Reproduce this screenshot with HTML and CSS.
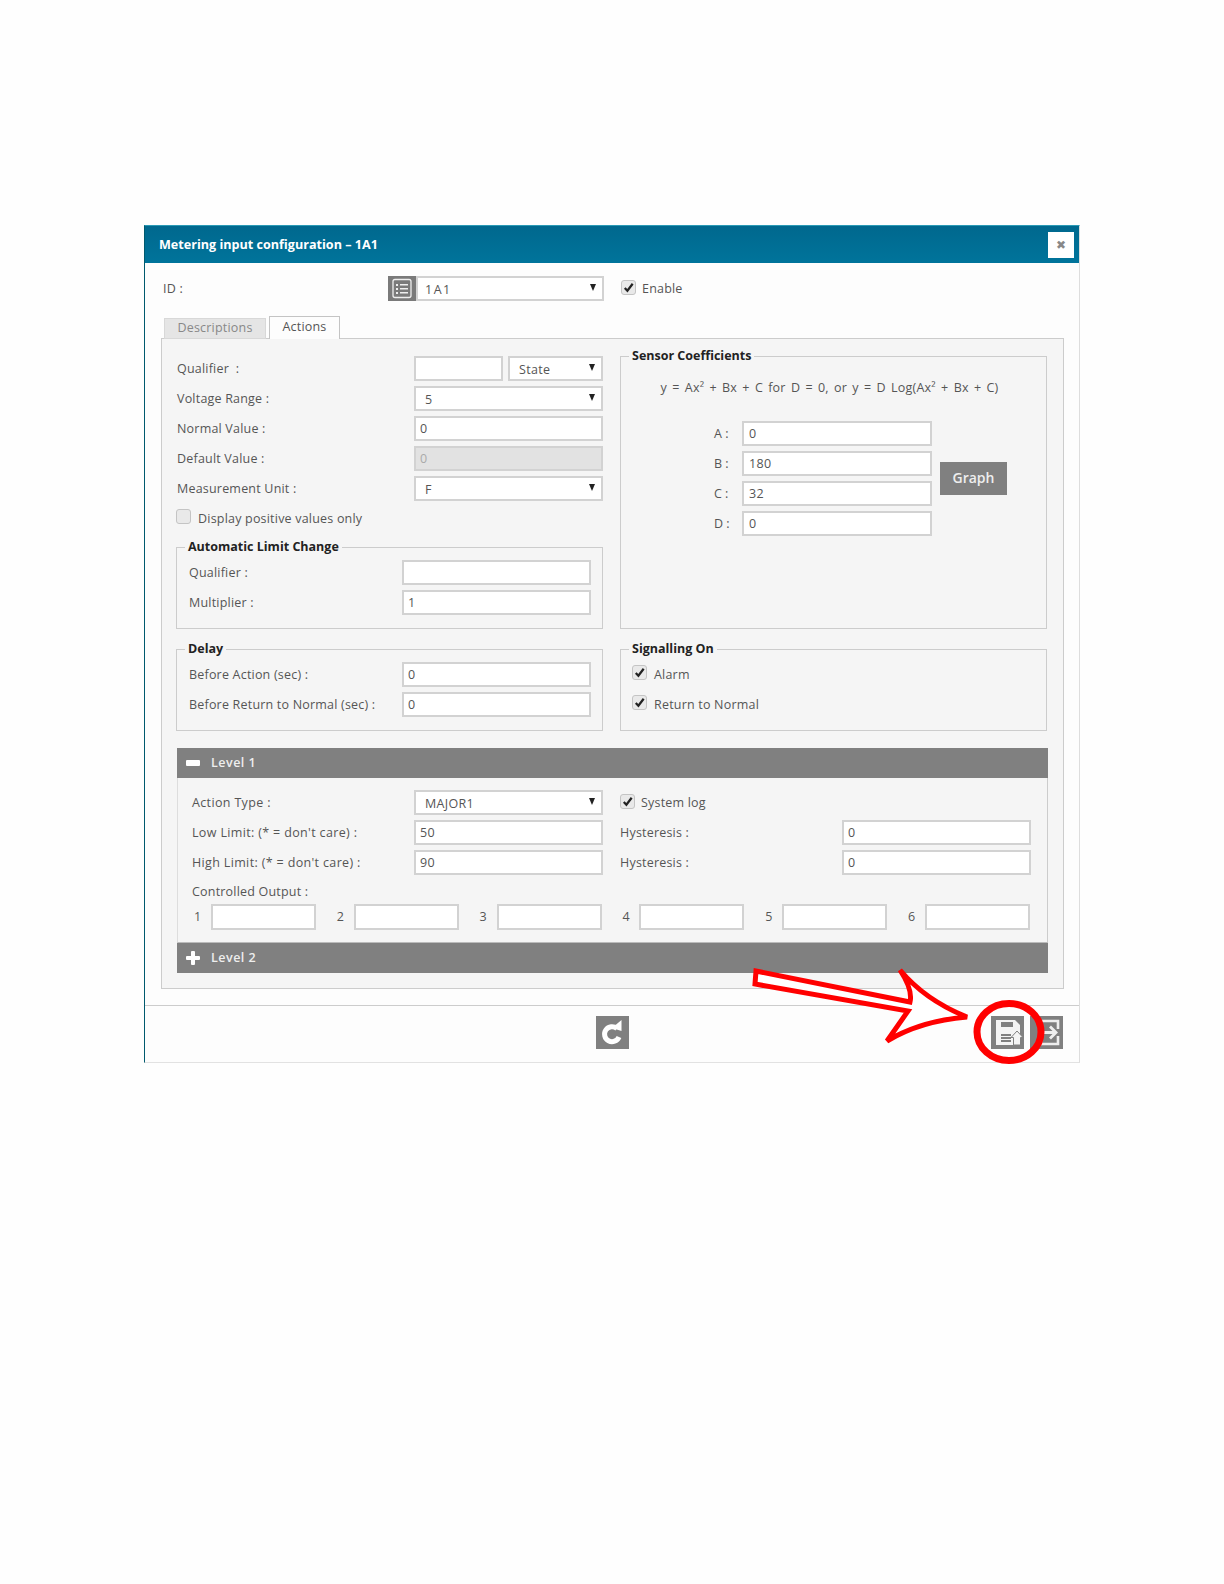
FILE: index.html
```html
<!DOCTYPE html>
<html lang="en">
<head>
<meta charset="utf-8">
<title>Metering input configuration</title>
<link rel="stylesheet" href="styles.css">
</head>
<body>
<div class="dialog">
  <header class="head">
    <span class="head-title">Metering input configuration – 1A1</span>
    <span class="close">✖</span>
  </header>

  <div class="id-row">
    <span class="id-label">ID :</span>
    <span class="id-icon">
      <svg viewBox="0 0 28 25" width="28" height="25"><rect x="5" y="3.5" width="18" height="18" rx="2" fill="none" stroke="#eee" stroke-width="1.3"/><path d="M8 8h2v2H8zM8 12h2v2H8zM8 16h2v2H8zM12 8h8v1.600h-8zM12 12h8v1.600h-8zM12 16h8v1.600h-8z" fill="#eee"/></svg>
    </span>
    <div class="field select id-select"><span>1A1</span><i class="caret"></i></div>
    <label class="check id-check"><span class="box"><svg viewBox="0 0 14 14" width="13" height="13"><path d="M3 7.500l2.800 3L11.500 3" fill="none" stroke="#222" stroke-width="2.400"/></svg></span>Enable</label>
  </div>

  <div class="tabs">
    <span class="tab">Descriptions</span>
    <span class="tab tab-on">Actions</span>
  </div>

  <div class="panel">
    <div class="cols">
      <div class="col-main">
        <div class="rows">
          <div class="row"><span class="lbl">Qualifier&nbsp; :</span><div class="pair"><div class="field small"></div><div class="field select state"><span>State</span><i class="caret"></i></div></div></div>
          <div class="row"><span class="lbl">Voltage Range :</span><div class="field select wide"><span>5</span><i class="caret"></i></div></div>
          <div class="row"><span class="lbl">Normal Value :</span><div class="field wide">0</div></div>
          <div class="row"><span class="lbl">Default Value :</span><div class="field wide off">0</div></div>
          <div class="row"><span class="lbl">Measurement Unit :</span><div class="field select wide"><span>F</span><i class="caret"></i></div></div>
          <label class="check check-row"><span class="box"></span>Display positive values only</label>
        </div>
        <section class="group group-limit">
          <div class="legend">Automatic Limit Change</div>
          <div class="row sub"><span class="lbl">Qualifier :</span><div class="field wide"></div></div>
          <div class="row sub"><span class="lbl">Multiplier :</span><div class="field wide">1</div></div>
        </section>
      </div>

      <section class="group group-sensor">
        <div class="legend">Sensor Coefficients</div>
        <p class="formula">y = Ax² + Bx + C for D = 0, or y = D Log(Ax² + Bx + C)</p>
        <div class="coef">
          <div class="coef-rows">
            <div class="coef-row"><span>A :</span><div class="field coef-field">0</div></div>
            <div class="coef-row"><span>B :</span><div class="field coef-field">180</div></div>
            <div class="coef-row"><span>C :</span><div class="field coef-field">32</div></div>
            <div class="coef-row"><span>D :</span><div class="field coef-field">0</div></div>
          </div>
          <span class="graph">Graph</span>
        </div>
      </section>

      <section class="group group-delay">
        <div class="legend">Delay</div>
        <div class="row sub"><span class="lbl">Before Action (sec) :</span><div class="field wide">0</div></div>
        <div class="row sub"><span class="lbl">Before Return to Normal (sec) :</span><div class="field wide">0</div></div>
      </section>

      <section class="group group-delay">
        <div class="legend">Signalling On</div>
        <label class="check sig"><span class="box"><svg viewBox="0 0 14 14" width="13" height="13"><path d="M3 7.500l2.800 3L11.500 3" fill="none" stroke="#222" stroke-width="2.400"/></svg></span>Alarm</label>
        <label class="check sig"><span class="box"><svg viewBox="0 0 14 14" width="13" height="13"><path d="M3 7.500l2.800 3L11.500 3" fill="none" stroke="#222" stroke-width="2.400"/></svg></span>Return to Normal</label>
      </section>
    </div>

    <div class="bar bar-first">
      <svg class="bar-icon" viewBox="0 0 14 14" width="14" height="14"><rect x="0" y="4" width="14" height="6" rx="1" fill="#fff"/></svg>
      <span>Level 1</span>
    </div>
    <div class="level">
      <div class="level-grid">
        <div class="row"><span class="lbl lbl-level">Action Type :</span><div class="field select wide"><span>MAJOR1</span><i class="caret"></i></div></div>
        <label class="check log"><span class="box"><svg viewBox="0 0 14 14" width="13" height="13"><path d="M3 7.500l2.800 3L11.500 3" fill="none" stroke="#222" stroke-width="2.400"/></svg></span>System log</label>
        <div class="row"><span class="lbl lbl-level">Low Limit: (* = don't care) :</span><div class="field wide">50</div></div>
        <div class="row"><span class="lbl lbl-hyst">Hysteresis :</span><div class="field wide">0</div></div>
        <div class="row"><span class="lbl lbl-level">High Limit: (* = don't care) :</span><div class="field wide">90</div></div>
        <div class="row"><span class="lbl lbl-hyst">Hysteresis :</span><div class="field wide">0</div></div>
      </div>
      <div class="out-label">Controlled Output :</div>
      <div class="outs">
        <div class="out"><span>1</span><div class="field"></div></div>
        <div class="out"><span>2</span><div class="field"></div></div>
        <div class="out"><span>3</span><div class="field"></div></div>
        <div class="out"><span>4</span><div class="field"></div></div>
        <div class="out"><span>5</span><div class="field"></div></div>
        <div class="out"><span>6</span><div class="field"></div></div>
      </div>
    </div>
    <div class="bar">
      <svg class="bar-icon" viewBox="0 0 14 14" width="14" height="14"><path d="M5 1a1 1 0 0 1 1-1h2a1 1 0 0 1 1 1v4h4a1 1 0 0 1 1 1v2a1 1 0 0 1-1 1H9v4a1 1 0 0 1-1 1H6a1 1 0 0 1-1-1V9H1a1 1 0 0 1-1-1V6a1 1 0 0 1 1-1h4z" fill="#fff"/></svg>
      <span>Level 2</span>
    </div>
  </div>

  <footer class="foot">
    <span></span>
    <span class="btn">
      <svg viewBox="0 0 33 33" width="33" height="33"><path d="M21 12.500A7.500 7.500 0 1 0 23 21" fill="none" stroke="#fff" stroke-width="5"/><path d="M16 12L25.500 4v11z" fill="#fff"/></svg>
    </span>
    <div class="foot-right">
      <span class="btn">
        <svg viewBox="0 0 33 33" width="33" height="33"><path d="M5 4h19l5 5v20H5z" fill="#f4f4f4"/><rect x="10" y="6" width="12" height="5" fill="#808080"/><path d="M10 18h10v2H10zM10 21h10v2H10zM10 24h10v2H10z" fill="#808080"/><path d="M26 15l6 6.500h-2.500V29h-7v-7.500H20z" fill="#f4f4f4" stroke="#808080" stroke-width="1"/></svg>
      </span>
      <span class="btn">
        <svg viewBox="0 0 33 33" width="33" height="33"><path d="M11 12V5h17v8M28 20v8H11v-8" fill="none" stroke="#eee" stroke-width="2.600"/><path d="M13 16.500h13M20 10.500l6 6-6 6" fill="none" stroke="#eee" stroke-width="2.800"/></svg>
      </span>
    </div>
  </footer>

  <svg class="marks" viewBox="0 0 340 120" width="340" height="120">
    <path d="M26 6L25 19L178 46L157 76Q190 56 237 52Q195 35 170 5Q183 25 180 37z" fill="#fff" stroke="#f00" stroke-width="5"/>
    <ellipse cx="279" cy="67" rx="32" ry="28.500" fill="none" stroke="#f00" stroke-width="7"/>
  </svg>
</div>
</body>
</html>
```
FILE: styles.css
```css
* { box-sizing: border-box; }
html, body { margin: 0; background: #fefefe; }
body {
  height: 1584px;
  padding: 225px 0 0 144px;
  font: 12.500px/18px "Open Sans", "Liberation Sans", sans-serif;
  color: #555;
}
.dialog {
  position: relative;
  width: 936px;
  height: 838px;
  border-left: 1px solid #005a6e;
  border-right: 1px solid #ddd;
  border-bottom: 1px solid #e2e2e2;
  border-top: 1px solid #2a9ab5;
  background: #fdfdfd;
}
.head {
  height: 37px;
  display: flex;
  align-items: center;
  justify-content: space-between;
  padding: 0 5px 0 14px;
  background: linear-gradient(#00688e, #00749b);
  color: #fff;
}
.head-title { font-weight: 700; font-size: 12.600px; padding-top: 1px; }
.close {
  width: 26px; height: 26px;
  background: #fff;
  color: #888;
  font: 12px/26px "DejaVu Sans", sans-serif;
  text-align: center;
}
.id-row {
  display: flex;
  align-items: center;
  height: 25px;
  margin-top: 13px;
  padding-left: 18px;
}
.id-label { width: 225px; letter-spacing: .2px; }
.id-icon { width: 28px; height: 25px; background: #7a7a7a; display: block; }
.id-icon svg { display: block; }
.id-select { width: 188px; }
.id-select span { margin-left: -2px; letter-spacing: 1.500px; }
.id-check { margin-left: 17px; }

.field {
  flex: none;
  height: 25px;
  border: 2px solid #d2d2d2;
  background: #fff;
  padding: 0 4px;
  line-height: 22px;
  color: #555;
  letter-spacing: .3px;
}
.select {
  display: flex;
  align-items: center;
  justify-content: space-between;
  padding: 2px 6px 0 9px;
}
.caret {
  display: block;
  margin-top: -5px;
  border-style: solid;
  border-width: 7px 3.500px 0;
  border-color: #222 transparent transparent;
}
.wide { width: 189px; }
.small { width: 89px; }
.state { width: 95px; }
.pair { display: flex; gap: 5px; }
.off { background: #e2e2e2; color: #aaa; }

.check { display: flex; align-items: center; gap: 6px; letter-spacing: .2px; }
.box {
  flex: none;
  width: 15px; height: 15px;
  border: 1px solid #c4c4c4;
  border-radius: 3px;
  background: #e9e9e9;
  margin-top: -3px;
}
.box svg { display: block; }

.tabs { display: flex; gap: 3px; margin: 15px 0 -1px 19px; height: 23px; align-items: flex-end; }
.tab {
  height: 21px;
  width: 102px;
  text-align: center;
  line-height: 17px;
  background: #e5e5e5;
  border: 1px solid #d8d8d8;
  color: #888;
  letter-spacing: .2px;
}
.tab-on {
  position: relative;
  height: 23px;
  width: 71px;
  line-height: 20px;
  background: #fdfdfd;
  border: 1px solid #c4c4c4;
  border-bottom: 0;
  color: #555;
}
.panel {
  width: 903px;
  height: 651px;
  margin-left: 16px;
  padding: 17px 0 0 14px;
  border: 1px solid #ccc;
  background: #f5f5f5;
}
.cols {
  display: grid;
  grid-template-columns: 427px 427px;
  column-gap: 17px;
  grid-template-rows: 273px 82px;
  row-gap: 20px;
}
.col-main { display: flex; flex-direction: column; }
.rows { display: flex; flex-direction: column; gap: 5px; }
.row { display: flex; align-items: center; height: 25px; }
.lbl { flex: none; width: 238px; padding-left: 1px; letter-spacing: .2px; }
.check-row { height: 25px; gap: 7px; }
.check-row .box { margin-top: -4px; }
.group {
  border: 1px solid #ccc;
  padding: 0 12px;
}
.legend {
  width: fit-content;
  margin: -9px 0 0 -4px;
  padding: 0 3px;
  height: 16px;
  line-height: 16px;
  background: #f5f5f5;
  color: #222;
  font-weight: 700;
}
.group-limit { margin-top: 16px; height: 82px; }
.sub { margin-top: 5px; }
.sub .lbl { width: 213px; padding-left: 0; }
.group-delay { height: 82px; }
.group-delay .check { height: 30px; }
.group-delay .legend + .check { margin-top: 3px; }
.sig { gap: 7px; margin-left: -1px; }
.sig .box { margin-top: -5px; }
.formula { margin: 15px 0 0; padding-right: 8px; text-align: center; letter-spacing: .2px; word-spacing: 1.800px; }
.coef { display: flex; align-items: center; gap: 8px; margin-top: 24px; padding-left: 81px; }
.coef-rows { display: flex; flex-direction: column; gap: 5px; }
.coef-row { display: flex; align-items: center; height: 25px; }
.coef-row span { width: 28px; }
.coef-field { width: 190px; padding-left: 5px; }
.graph {
  width: 67px; height: 33px;
  background: #808080;
  color: #eee;
  font-weight: 600;
  font-size: 14px;
  line-height: 32px;
  text-align: center;
}
.bar {
  display: flex;
  align-items: center;
  gap: 11px;
  width: 871px;
  height: 30px;
  margin-left: 1px;
  padding-left: 9px;
  background: #808080;
  color: #eee;
  font-weight: 600;
  letter-spacing: .5px;
}
.bar-first { margin-top: 17px; }
.bar-icon { display: block; }
.level {
  width: 871px;
  height: 165px;
  margin-left: 1px;
  padding-top: 12px;
  border-left: 1px solid #ddd;
  border-right: 1px solid #ccc;
  border-bottom: 1px solid #bbb;
}
.level-grid {
  display: grid;
  grid-template-columns: 427px 427px;
  column-gap: 1px;
  row-gap: 5px;
  padding-left: 14px;
}
.lbl-level { width: 222px; padding-left: 0; letter-spacing: .35px; }
.lbl-hyst { width: 222px; padding-left: 0; }
.log { height: 25px; }
.out-label { margin: 8px 0 0 14px; height: 18px; letter-spacing: .2px; }
.outs {
  display: grid;
  grid-template-columns: repeat(6, 124px);
  column-gap: 18.800px;
  margin: 3px 0 0 14px;
}
.out { display: flex; align-items: center; }
.out span { width: 19px; padding-left: 2px; }
.out .field { flex: 1; height: 26px; }

.foot {
  display: grid;
  grid-template-columns: 1fr auto 1fr;
  align-items: center;
  height: 57px;
  margin-top: 16px;
  padding-bottom: 3px;
  border-top: 1px solid #ccc;
}
.btn { width: 33px; height: 33px; background: #808080; display: block; }
.btn svg { display: block; }
.foot-right { display: flex; justify-content: flex-end; gap: 6px; padding-right: 16px; }

.marks { position: absolute; left: 585px; top: 739px; pointer-events: none; }
```
